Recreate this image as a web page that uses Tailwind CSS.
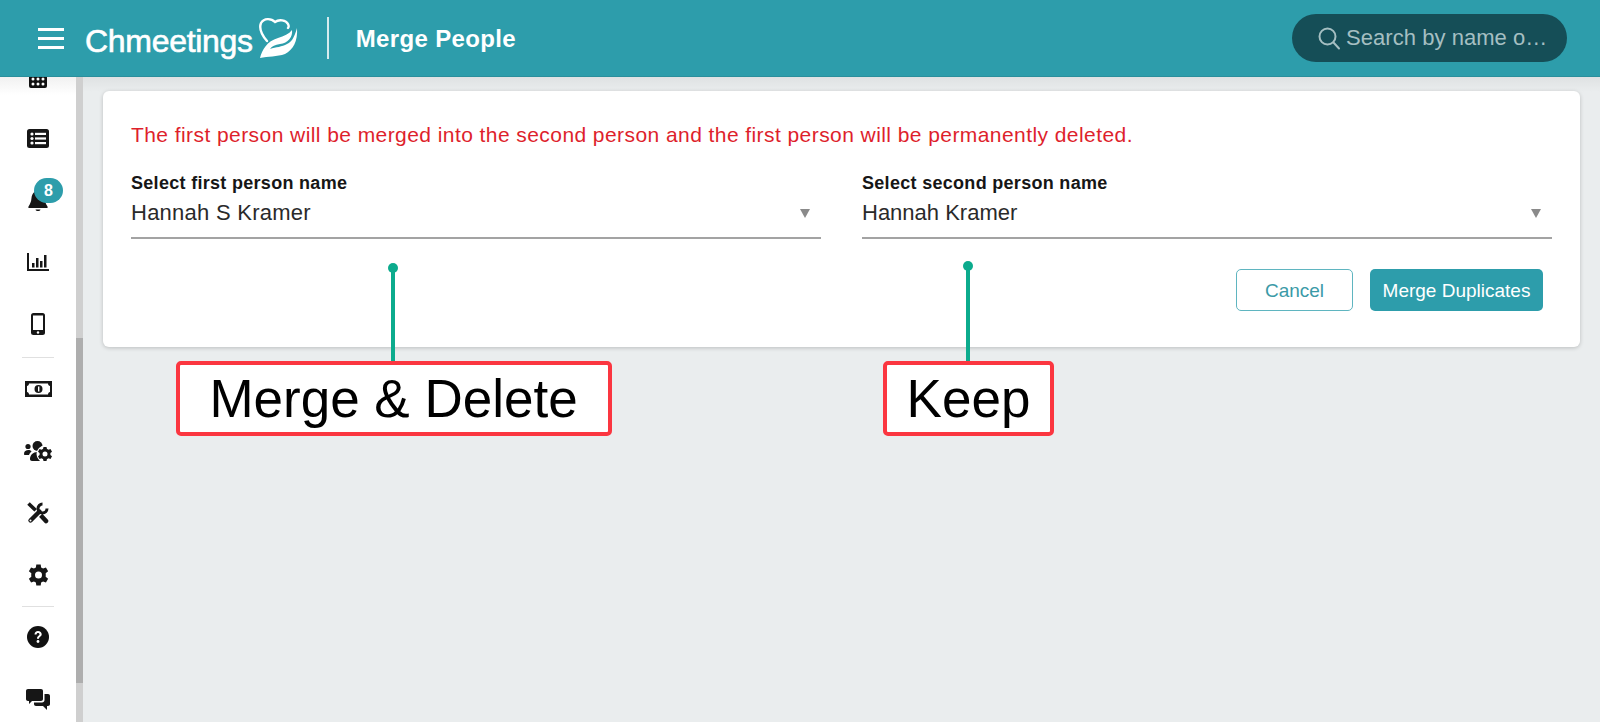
<!DOCTYPE html>
<html lang="en">
<head>
<meta charset="utf-8">
<title>Merge People</title>
<script src="https://cdn.jsdelivr.net/npm/@tailwindcss/browser@4"></script>
</head>
<body class="m-0 overflow-hidden bg-[#eaedee] font-['Liberation_Sans',Arial,sans-serif]">
<div class="w-[1600px] h-[722px] flex flex-col overflow-hidden">
  <header class="h-[77px] shrink-0 bg-[#2d9dab] border-b border-[#2a8f9c] flex items-center text-white relative z-10">
    <button class="ml-[38px] w-[26px] flex flex-col gap-[6px]" aria-label="Menu">
      <span class="block h-[3px] bg-white"></span><span class="block h-[3px] bg-white"></span><span class="block h-[3px] bg-white"></span>
    </button>
    <span class="ml-[21px] mt-[6px] text-[32px] font-normal tracking-[-0.3px] [-webkit-text-stroke:0.6px_white] leading-none">Chmeetings</span>
    <svg class="ml-[5px] -mt-[1px]" width="41" height="42" viewBox="0 0 41 42" fill="none">
      <path d="M9 24C3 17 1 11 3 6C6 1 13 1 17 5C21 2 28 3 30 7C31 9 31 10 30 11" stroke="white" stroke-width="2.4" stroke-linecap="round"/>
      <path d="M2 41C4 33 9 24 20 21C26 19 31 17 34 13C35 20 30 26 22 27C17 28 14 29 12 32C18 30 24 30 29 27C33 25 36 22 39 11C40 24 35 33 27 37C19 40 10 39 2 41Z" fill="white"/>
    </svg>
    <span class="ml-[28px] w-[2px] h-[42px] bg-white/80"></span>
    <h1 class="ml-[27px] mt-[1px] text-[24px] font-bold tracking-[0.35px] leading-none">Merge People</h1>
    <div class="ml-auto mr-[33px] w-[275px] h-[48px] rounded-full bg-[#154e57] flex items-center pl-[25px] text-[#a5bfc2]">
      <svg width="24" height="24" viewBox="0 0 24 24" fill="none" stroke="currentColor" stroke-width="2" stroke-linecap="round"><circle cx="10.5" cy="10.500" r="8"/><path d="M16.500 16.500L22 22.500"/></svg>
      <span class="ml-[5px] text-[22px] tracking-[0.05px] leading-none">Search by name o…</span>
    </div>
  </header>
  <div class="flex flex-1 min-h-0">
    <aside class="w-[76px] shrink-0 bg-white bg-[linear-gradient(#f1f1f1,#ffffff_18px)] flex flex-col items-center text-[#161616] overflow-hidden">
      <div class="h-[62px] shrink-0 flex items-center justify-center -mt-[32px]">
        <svg class="mt-[6px]" width="18" height="18" viewBox="0 0 18 18"><rect width="18" height="18" rx="2" fill="#111"/><g fill="#fff"><circle cx="4" cy="9" r="1.500"/><circle cx="9" cy="9" r="1.500"/><circle cx="14" cy="9" r="1.500"/><circle cx="4" cy="14" r="1.500"/><circle cx="9" cy="14" r="1.500"/><circle cx="14" cy="14" r="1.500"/></g></svg>
      </div>
      <div class="h-[62px] shrink-0 flex items-center justify-center">
        <svg width="22" height="19" viewBox="0 0 22 19"><rect width="22" height="19" rx="2.500" fill="#161616"/><g fill="#fff"><circle cx="5" cy="5" r="1.600"/><circle cx="5" cy="9.500" r="1.600"/><circle cx="5" cy="14" r="1.600"/><rect x="8" y="3.800" width="11" height="2.200"/><rect x="8" y="8.400" width="11" height="2.200"/><rect x="8" y="13" width="11" height="2.200"/></g></svg>
      </div>
      <div class="h-[62px] shrink-0 flex items-center justify-center relative">
        <svg class="mt-[2px]" width="20" height="22" viewBox="0 0 20 22" fill="#161616"><path d="M10 0C6 1 4 4 3.500 8C3.200 12 2 14 .5 16.500C0 17.500 .5 18 1.500 18H18.500C19.500 18 20 17.500 19.500 16.500C18 14 16.800 12 16.500 8C16 4 14 1 10 0Z"/><path d="M7.500 19.500H12.500C12 21.500 8 21.500 7.500 19.500Z"/></svg>
        <span class="absolute left-[6px] top-[9px] w-[29px] h-[25px] rounded-full bg-[#2d9dab] text-white text-[16px] font-bold flex items-center justify-center leading-none">8</span>
      </div>
      <div class="h-[62px] shrink-0 flex items-center justify-center">
        <svg width="22" height="18" viewBox="0 0 22 18" fill="#161616"><path d="M0 0H2V16H22V18H0Z"/><rect x="5" y="10" width="2.500" height="4.500"/><rect x="9" y="5" width="2.500" height="9.500"/><rect x="13" y="8" width="2.500" height="6.500"/><rect x="17" y="2" width="2.500" height="12.500"/></svg>
      </div>
      <div class="h-[62px] shrink-0 flex items-center justify-center">
        <svg width="14" height="22" viewBox="0 0 14 22"><rect width="14" height="22" rx="2.500" fill="#161616"/><rect x="2" y="2.500" width="10" height="14.500" fill="#fff"/><circle cx="7" cy="19.500" r="1.200" fill="#fff"/></svg>
      </div>
      <div class="mt-[2px] w-[32px] h-[1px] bg-[#e0e0e0] shrink-0"></div>
      <div class="h-[62px] shrink-0 flex items-center justify-center">
        <svg width="27" height="16" viewBox="0 0 27 16"><rect width="27" height="16" fill="#161616"/><path d="M4 2.500H23C23 4 24 5 25 5V11C24 11 23 12 23 13.500H4C4 12 3 11 2 11V5C3 5 4 4 4 2.500Z" fill="#fff"/><circle cx="13.500" cy="8" r="4" fill="#161616"/><rect x="13" y="5.500" width="1.400" height="5" fill="#fff"/></svg>
      </div>
      <div class="h-[62px] shrink-0 flex items-center justify-center">
        <svg width="28" height="20" viewBox="0 0 28 20" fill="#161616"><circle cx="4" cy="5.500" r="2.600"/><path d="M0 13C0 10 2 9 4.500 9C6 9 7 9.500 7.500 10.500C6.500 11.500 5.500 12.500 5 14H1C.4 14 0 13.600 0 13Z"/><circle cx="13.500" cy="5" r="5"/><path d="M6 18C6 14 9 11 13.500 11C15 11 16.500 11.400 17.500 12L16.500 20H8C6.800 20 6 19.200 6 18Z"/><circle cx="21" cy="13" r="8.500" fill="#fff"/><path fill-rule="evenodd" d="M20.500 7H23.500L24 9C24.500 9.200 25 9.500 25.500 9.800L27.500 9.100L29 11.800L27.400 13.100V14.900L29 16.200L27.500 18.900L25.500 18.200C25 18.500 24.500 18.800 24 19L23.500 21H20.500L20 19C19.500 18.800 19 18.500 18.500 18.200L16.500 18.900L15 16.200L16.600 14.900V13.100L15 11.800L16.500 9.100L18.500 9.800C19 9.500 19.500 9.200 20 9ZM22 11.500A2.500 2.500 0 1 0 22 16.500A2.500 2.500 0 1 0 22 11.500Z" transform="translate(-1 -1)"/></svg>
      </div>
      <div class="h-[62px] shrink-0 flex items-center justify-center">
        <svg width="22" height="22" viewBox="0 0 22 22" fill="none" stroke="#161616"><path d="M1.500 1.500L13 12.500" stroke-width="3.600"/><path d="M12.500 12L19 19" stroke-width="4.600" stroke-linecap="round"/><path d="M3 19L13 9" stroke="#fff" stroke-width="7"/><path d="M3.500 18.500L12.500 9.500" stroke-width="4.400" stroke-linecap="round"/><path d="M20 6.500A4.500 4.500 0 1 1 15.500 2" stroke-width="3"/><circle cx="3.500" cy="18.500" r="1" fill="#fff" stroke="none"/></svg>
      </div>
      <div class="h-[62px] shrink-0 flex items-center justify-center">
        <svg width="21" height="22" viewBox="0 0 24 24" fill="#161616"><path fill-rule="evenodd" d="M9.500 0H14.500L15 3.500C15.800 3.800 16.500 4.200 17.200 4.700L20.500 3.400L23 7.700L20.200 9.900C20.300 10.800 20.300 13.200 20.200 14.100L23 16.300L20.500 20.600L17.200 19.300C16.500 19.800 15.800 20.200 15 20.500L14.500 24H9.500L9 20.500C8.200 20.200 7.500 19.800 6.800 19.300L3.500 20.600L1 16.300L3.800 14.100C3.700 13.200 3.700 10.800 3.800 9.900L1 7.700L3.500 3.400L6.800 4.700C7.500 4.200 8.200 3.800 9 3.500ZM12 8A4 4 0 1 0 12 16A4 4 0 1 0 12 8Z"/></svg>
      </div>
      <div class="w-[32px] h-[1px] bg-[#e0e0e0] shrink-0"></div>
      <div class="h-[60px] shrink-0 flex items-center justify-center">
        <svg width="22" height="22" viewBox="0 0 22 22"><circle cx="11" cy="11" r="11" fill="#111"/><path d="M7.500 8.500C7.500 6.500 9 5 11 5C13.200 5 14.700 6.400 14.700 8.200C14.700 10.500 12 10.600 12 12.700H10C10 9.800 12.500 9.800 12.500 8.300C12.500 7.600 11.900 7 11 7C10.100 7 9.600 7.700 9.500 8.500Z" fill="#fff"/><circle cx="11" cy="15.500" r="1.400" fill="#fff"/></svg>
      </div>
      <div class="mt-[3px] h-[60px] shrink-0 flex items-center justify-center">
        <svg width="24" height="22" viewBox="0 0 24 22" fill="#161616"><path d="M2 0H15C16.200 0 17 .8 17 2V10C17 11.200 16.200 12 15 12H6L3 15V12H2C.8 12 0 11.200 0 10V2C0 .8 .8 0 2 0Z"/><path d="M18.500 5H22C23.200 5 24 5.800 24 7V15C24 16.200 23.200 17 22 17H21V21L17 17H10C8.800 17 8 16.200 8 15V13.500H16C17.500 13.500 18.500 12.500 18.500 11Z"/></svg>
      </div>
    </aside>
    <div class="w-[7px] shrink-0 bg-[#cfcfcf] flex flex-col">
      <div class="h-[261px] shrink-0"></div>
      <div class="h-[345px] shrink-0 bg-[#aeaeae]"></div>
    </div>
    <main class="flex-1 min-w-0 relative bg-[#eaedee] bg-[linear-gradient(#dfe2e3,#eaedee_15px)] pt-[14px] pl-[20px] pr-[20px]">
      <section class="relative bg-white rounded-[6px] shadow-[0_1px_4px_rgba(0,0,0,0.2)] h-[256px] pl-[28px] pr-[28px]">
        <p class="pt-[32px] text-[21px] leading-[24px] tracking-[0.43px] text-[#de1f2c]">The first person will be merged into the second person and the first person will be permanently deleted.</p>
        <div class="mt-[26px] grid grid-cols-2 gap-[41px]">
          <div class="border-b-2 border-[#a3a3a3] h-[66px]">
            <div class="text-[18px] font-bold leading-[20px] tracking-[0.3px] text-[#161616]">Select first person name</div>
            <div class="flex items-center justify-between mt-[7px] pr-[11px]">
              <span class="text-[22px] leading-[26px] text-[#2a2a2a] tracking-[0.25px]">Hannah S Kramer</span>
              <span class="w-0 h-0 border-x-[5px] border-x-transparent border-t-[9px] border-t-[#8a8a8a]"></span>
            </div>
          </div>
          <div class="border-b-2 border-[#a3a3a3] h-[66px]">
            <div class="text-[18px] font-bold leading-[20px] tracking-[0.3px] text-[#161616]">Select second person name</div>
            <div class="flex items-center justify-between mt-[7px] pr-[11px]">
              <span class="text-[22px] leading-[26px] text-[#2a2a2a]">Hannah Kramer</span>
              <span class="w-0 h-0 border-x-[5px] border-x-transparent border-t-[9px] border-t-[#8a8a8a]"></span>
            </div>
          </div>
        </div>
        <div class="mt-[30px] flex justify-end gap-[17px] pr-[9px]">
          <button class="w-[117px] h-[42px] rounded-[5px] border border-[#5fb5c0] bg-white text-[#3b9aa7] text-[19px] leading-none">Cancel</button>
          <button class="w-[173px] h-[42px] rounded-[5px] bg-[#2d9dab] text-white text-[19px] leading-none">Merge Duplicates</button>
        </div>
      </section>
      <div class="absolute left-[93px] top-[284px] w-[436px] h-[75px] rounded-[5px] border-[4px] border-[#fb3640] bg-white flex items-center justify-center text-[53px] text-black leading-none pr-[1px]">Merge &amp; Delete</div>
      <div class="absolute left-[800px] top-[284px] w-[171px] h-[75px] rounded-[5px] border-[4px] border-[#fb3640] bg-white flex items-center justify-center text-[53px] text-black leading-none">Keep</div>
      <div class="absolute left-[308px] top-[190px] w-[4px] h-[94px] bg-[#0cab8d]"></div>
      <div class="absolute left-[305px] top-[186px] w-[10px] h-[10px] rounded-full bg-[#0cab8d]"></div>
      <div class="absolute left-[883px] top-[188px] w-[4px] h-[96px] bg-[#0cab8d]"></div>
      <div class="absolute left-[880px] top-[184px] w-[10px] h-[10px] rounded-full bg-[#0cab8d]"></div>
    </main>
  </div>
</div>
</body>
</html>
